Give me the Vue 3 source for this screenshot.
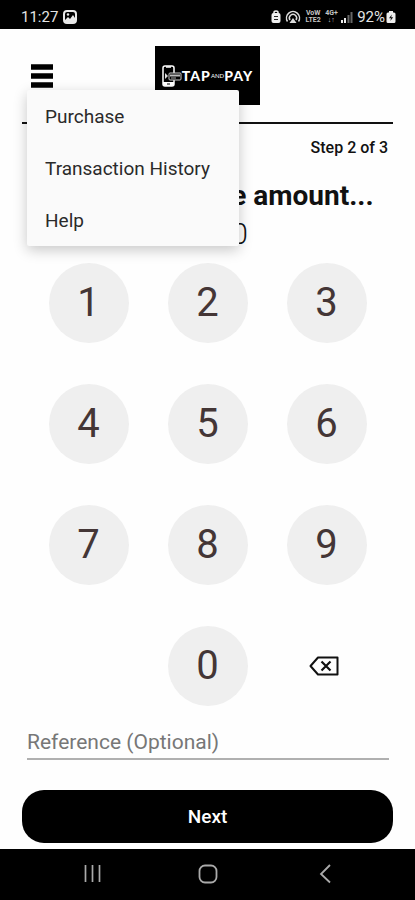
<script setup>
import { ref } from 'vue'

const menuOpen = ref(true)
const amount = ref('R 0.00')
const reference = ref('')
const menuItems = ['Purchase', 'Transaction History', 'Help']
const digits = ['1', '2', '3', '4', '5', '6', '7', '8', '9', '0']
</script>

<template>
  <div class="screen">
    <div class="status">
      <span class="clock">11:27</span>
      <svg class="picture" width="14" height="14" viewBox="0 0 14 14">
        <rect x="1" y="1" width="12" height="12" rx="3" fill="none" stroke="#e8e8e8" stroke-width="2" />
        <path d="M2 10 L5 7 L7 9 L10 5 L12 8 V12 H2 Z" fill="#e8e8e8" />
        <circle cx="5" cy="4.500" r="1.200" fill="#e8e8e8" />
      </svg>
      <div class="signals">
        <svg width="10" height="14" viewBox="0 0 10 14">
          <path d="M3 3.500 V2.500 Q3 1 5 1 Q7 1 7 2.500 V3.500" fill="none" stroke="#eee" stroke-width="1.500" />
          <rect x="0.500" y="3" width="9" height="10" rx="2" fill="#eee" />
          <path d="M3 6.500 H7 M3 9.500 H7" stroke="#222" stroke-width="1.200" />
        </svg>
        <svg width="16" height="14" viewBox="0 0 16 14" fill="none" stroke="#ddd" stroke-width="1.500">
          <path d="M2.500 11.500 A6.500 6.500 0 1 1 13.500 11.500" />
          <path d="M5 10 A3.600 3.600 0 1 1 11 10" />
          <path d="M4.500 13 L8 8 L11.500 13 Z" fill="#ddd" stroke="none" />
        </svg>
        <span class="tiny"><span>VoW</span><span>LTE2</span></span>
        <span class="tiny narrow"><span>4G+</span><span>↓↑</span></span>
        <svg width="12" height="14" viewBox="0 0 12 14">
          <path d="M1 10 V13 M4 8 V13" stroke="#eee" stroke-width="2" />
          <path d="M7.500 5 V13 M10.500 2 V13" stroke="#666" stroke-width="2" />
        </svg>
        <span class="percent">92%</span>
        <svg width="10" height="14" viewBox="0 0 10 14">
          <path d="M3 1 H7 V2.500 H8 Q9.500 2.500 9.500 4 V11.500 Q9.500 13 8 13 H2 Q0.500 13 0.500 11.500 V4 Q0.500 2.500 2 2.500 H3 Z" fill="#eee" />
          <path d="M5.800 4.500 L3 8.300 H5 L4.300 11 L7.200 7.200 H5.200 Z" fill="#111" />
        </svg>
      </div>
    </div>

    <main class="content">
      <header class="header">
        <button class="burger" type="button" aria-label="Menu" :aria-expanded="menuOpen" @click="menuOpen = !menuOpen">
          <svg width="22" height="24" viewBox="0 0 22 24">
            <path d="M0 3 H22 M0 12 H22 M0 21 H22" stroke="#000" stroke-width="5.500" />
          </svg>
        </button>
        <div class="logo">
          <svg width="20" height="22" viewBox="0 0 20 22">
            <rect x="1" y="1" width="11" height="20" rx="2" fill="none" stroke="#fff" stroke-width="1.500" />
            <path d="M4 2 H9" stroke="#fff" stroke-width="1.500" />
            <path d="M1 17 H12 V19 Q12 21 10 21 H3 Q1 21 1 19 Z" fill="#fff" />
            <path d="M5 19 H8" stroke="#000" />
            <rect x="7" y="8" width="12" height="7" rx="1" fill="#000" stroke="#ccc" />
            <path d="M8 10.500 H18" stroke="#bbb" stroke-width="2" />
            <path d="M9 13 H14" stroke="#aaa" />
            <path d="M3 8 L6 11 L3 14 Z" fill="#ddd" />
          </svg>
          <span class="word">TAP</span><span class="and">AND</span><span class="word">PAY</span>
        </div>
        <nav v-if="menuOpen" class="menu">
          <a v-for="item in menuItems" :key="item" href="#">{{ item }}</a>
        </nav>
      </header>

      <p class="step">Step 2 of 3</p>
      <h1 class="title">Please enter the amount...</h1>
      <output class="amount">{{ amount }}</output>

      <div class="keypad">
        <button v-for="digit in digits" :key="digit" type="button" class="key" :class="{ zero: digit === '0' }">{{ digit }}</button>
        <button type="button" class="erase" aria-label="Delete">
          <svg width="30" height="20" viewBox="0 0 30 20" fill="none" stroke="#111">
            <path d="M9 1.500 H28.500 V18.500 H9 L1.500 10 Z" stroke-width="2" stroke-linejoin="round" />
            <path d="M12.500 5.500 L21.500 14.500 M21.500 5.500 L12.500 14.500" stroke-width="2.200" />
          </svg>
        </button>
      </div>

      <input v-model="reference" class="reference" type="text" placeholder="Reference (Optional)" aria-label="Reference (Optional)" />
      <button class="next" type="button">Next</button>
    </main>

    <div class="system">
      <button type="button" aria-label="Recent apps">
        <svg width="20" height="20" viewBox="0 0 20 20"><path d="M2.500 1 V18 M9.500 1 V18 M16.500 1 V18" stroke="#aaa" stroke-width="1.700" /></svg>
      </button>
      <button type="button" aria-label="Home">
        <svg width="20" height="20" viewBox="0 0 20 20"><rect x="1.500" y="1.500" width="17" height="17" rx="5.500" fill="none" stroke="#aaa" stroke-width="1.800" /></svg>
      </button>
      <button type="button" aria-label="Back">
        <svg width="20" height="20" viewBox="0 0 20 20"><path d="M18 1 L9 10 L18 18.500" fill="none" stroke="#aaa" stroke-width="1.800" /></svg>
      </button>
    </div>
  </div>
</template>

<style>
body {
  margin: 0;
  background: #fefefe;
}
</style>

<style scoped>
.screen {
  display: flex;
  flex-direction: column;
  min-height: 100vh;
  font-family: Roboto, "Liberation Sans", sans-serif;
  color: #111;
}

button {
  padding: 0;
  border: 0;
  background: none;
  font-family: inherit;
  cursor: pointer;
}

svg {
  display: block;
  flex: none;
}

.status {
  display: flex;
  align-items: center;
  height: 29px;
  padding: 4px 19px 0 21px;
  box-sizing: border-box;
  background: #000;
  color: #e4e4e4;
  font-size: 15px;
}

.clock {
  margin-right: 5px;
}

.signals {
  display: flex;
  align-items: center;
  gap: 4px;
  margin-left: auto;
}

.tiny {
  display: flex;
  flex-direction: column;
  width: 16px;
  color: #c4c4c4;
  font-size: 7px;
  line-height: 7px;
  font-weight: 700;
  text-align: center;
}

.narrow {
  width: 12px;
}

.percent {
  margin-right: -3px;
}

.content {
  display: flex;
  flex: 1;
  flex-direction: column;
  padding: 0 22px 6px;
}

.header {
  position: relative;
  display: grid;
  grid-template-columns: 1fr auto 1fr;
  align-items: center;
  padding: 17px 0;
  border-bottom: 2px solid #111;
}

.burger {
  justify-self: start;
  margin-left: 9px;
}

.logo {
  display: flex;
  align-items: center;
  justify-content: center;
  width: 105px;
  height: 59px;
  background: #000;
  color: #fff;
  font-family: Lato, sans-serif;
}

.word {
  font-size: 14px;
  font-weight: 900;
  letter-spacing: 1px;
}

.and {
  font-size: 6px;
}

.menu {
  position: absolute;
  z-index: 1;
  top: 61px;
  left: 5px;
  width: 212px;
  border-radius: 2px;
  background: #fafafa;
  box-shadow: 0 4px 14px rgba(0, 0, 0, 0.22);
}

.menu a {
  display: block;
  padding: 1px 18px 0;
  font-size: 19px;
  line-height: 51px;
  color: #2a2a2a;
  text-decoration: none;
  white-space: nowrap;
}

.step {
  margin: 12px 5px 0 0;
  font-size: 16px;
  line-height: 24px;
  font-weight: 500;
  text-align: right;
}

.title {
  margin: 18px 0 0;
  font-size: 28px;
  line-height: 36px;
  font-weight: 700;
  text-align: center;
  white-space: nowrap;
}

.amount {
  margin-top: 2px;
  font-size: 29px;
  line-height: 36px;
  font-weight: 300;
  text-align: center;
}

.keypad {
  display: grid;
  grid-template-columns: repeat(3, 80px);
  grid-auto-rows: 80px;
  gap: 41px 39px;
  justify-content: center;
  margin-top: 11px;
}

.key {
  border-radius: 50%;
  background: #efefef;
  color: #443636;
  font-size: 40px;
  line-height: 80px;
}

.zero {
  grid-column: 2;
}

.erase {
  display: flex;
  align-items: center;
  justify-content: center;
  padding-right: 6px;
}

.reference {
  height: 40px;
  margin: 14px 4px 0 5px;
  padding: 6px 0 0;
  border: 0;
  border-bottom: 2px solid #b0b0b0;
  border-radius: 0;
  background: transparent;
  color: #111;
  font-family: inherit;
  font-size: 21px;
  outline: none;
  box-sizing: border-box;
}

.reference::placeholder {
  color: #777;
  opacity: 1;
}

.next {
  height: 53px;
  margin-top: 30px;
  border-radius: 22px;
  background: #000;
  color: #fff;
  font-size: 19px;
  font-weight: 500;
}

.system {
  display: flex;
  align-items: center;
  justify-content: space-between;
  height: 52px;
  padding: 0 80px 2px;
  box-sizing: border-box;
  background: #000;
}

.system button {
  padding: 3px;
}
</style>
